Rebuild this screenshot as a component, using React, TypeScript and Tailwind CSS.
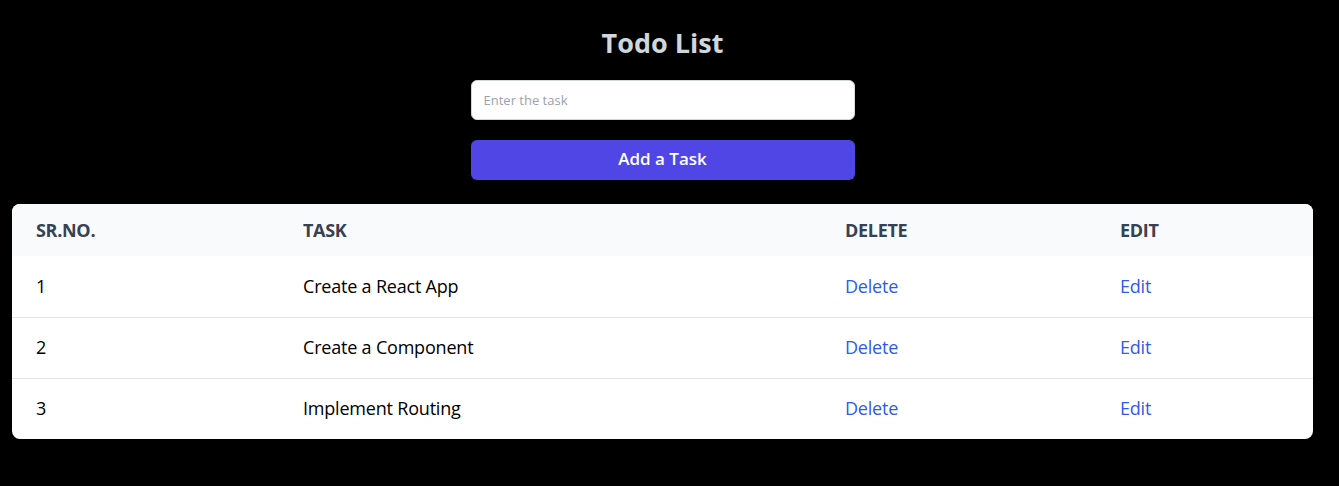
import React from "react";

const tasks = ["Create a React App", "Create a Component", "Implement Routing"];

export default function App() {
  return (
    <div
      className="min-h-screen bg-black pl-3 pr-[26px] pt-[25px]"
      style={{ fontFamily: '"Open Sans", "Noto Sans", sans-serif' }}
    >
      <h1 className="text-center text-[27px] font-bold leading-9 text-gray-300">Todo List</h1>
      <div className="mx-auto mt-[19px] flex w-96 flex-col gap-5">
        <input
          type="text"
          placeholder="Enter the task"
          className="h-10 w-full rounded-md border border-gray-300 bg-white px-3 text-[13px] text-gray-900 placeholder:text-gray-400 outline-none"
        />
        <button className="h-10 w-full rounded-md bg-[#4f46e5] pb-0.5 text-[17px] font-semibold text-white">
          Add a Task
        </button>
      </div>
      <div className="mt-6 overflow-hidden rounded-lg bg-white">
        <div className="grid h-[52px] grid-cols-[267px_542px_275px_1fr] items-center bg-gray-50 text-lg font-bold uppercase tracking-[-0.3px] text-gray-700">
          <div className="px-6">Sr.No.</div>
          <div className="px-6">Task</div>
          <div className="px-6">Delete</div>
          <div className="px-6">Edit</div>
        </div>
        {tasks.map((t, i) => (
          <div
            key={t}
            className={`grid h-[61px] grid-cols-[267px_542px_275px_1fr] items-center pb-0.5 text-lg font-medium tracking-[-0.2px] text-black ${
              i > 0 ? "border-t border-gray-200" : ""
            }`}
          >
            <div className="px-6">{i + 1}</div>
            <div className="px-6">{t}</div>
            <div className="px-6">
              <a className="cursor-pointer text-[#2f5be6]">Delete</a>
            </div>
            <div className="px-6">
              <a className="cursor-pointer text-[#2f5be6]">Edit</a>
            </div>
          </div>
        ))}
      </div>
    </div>
  );
}
